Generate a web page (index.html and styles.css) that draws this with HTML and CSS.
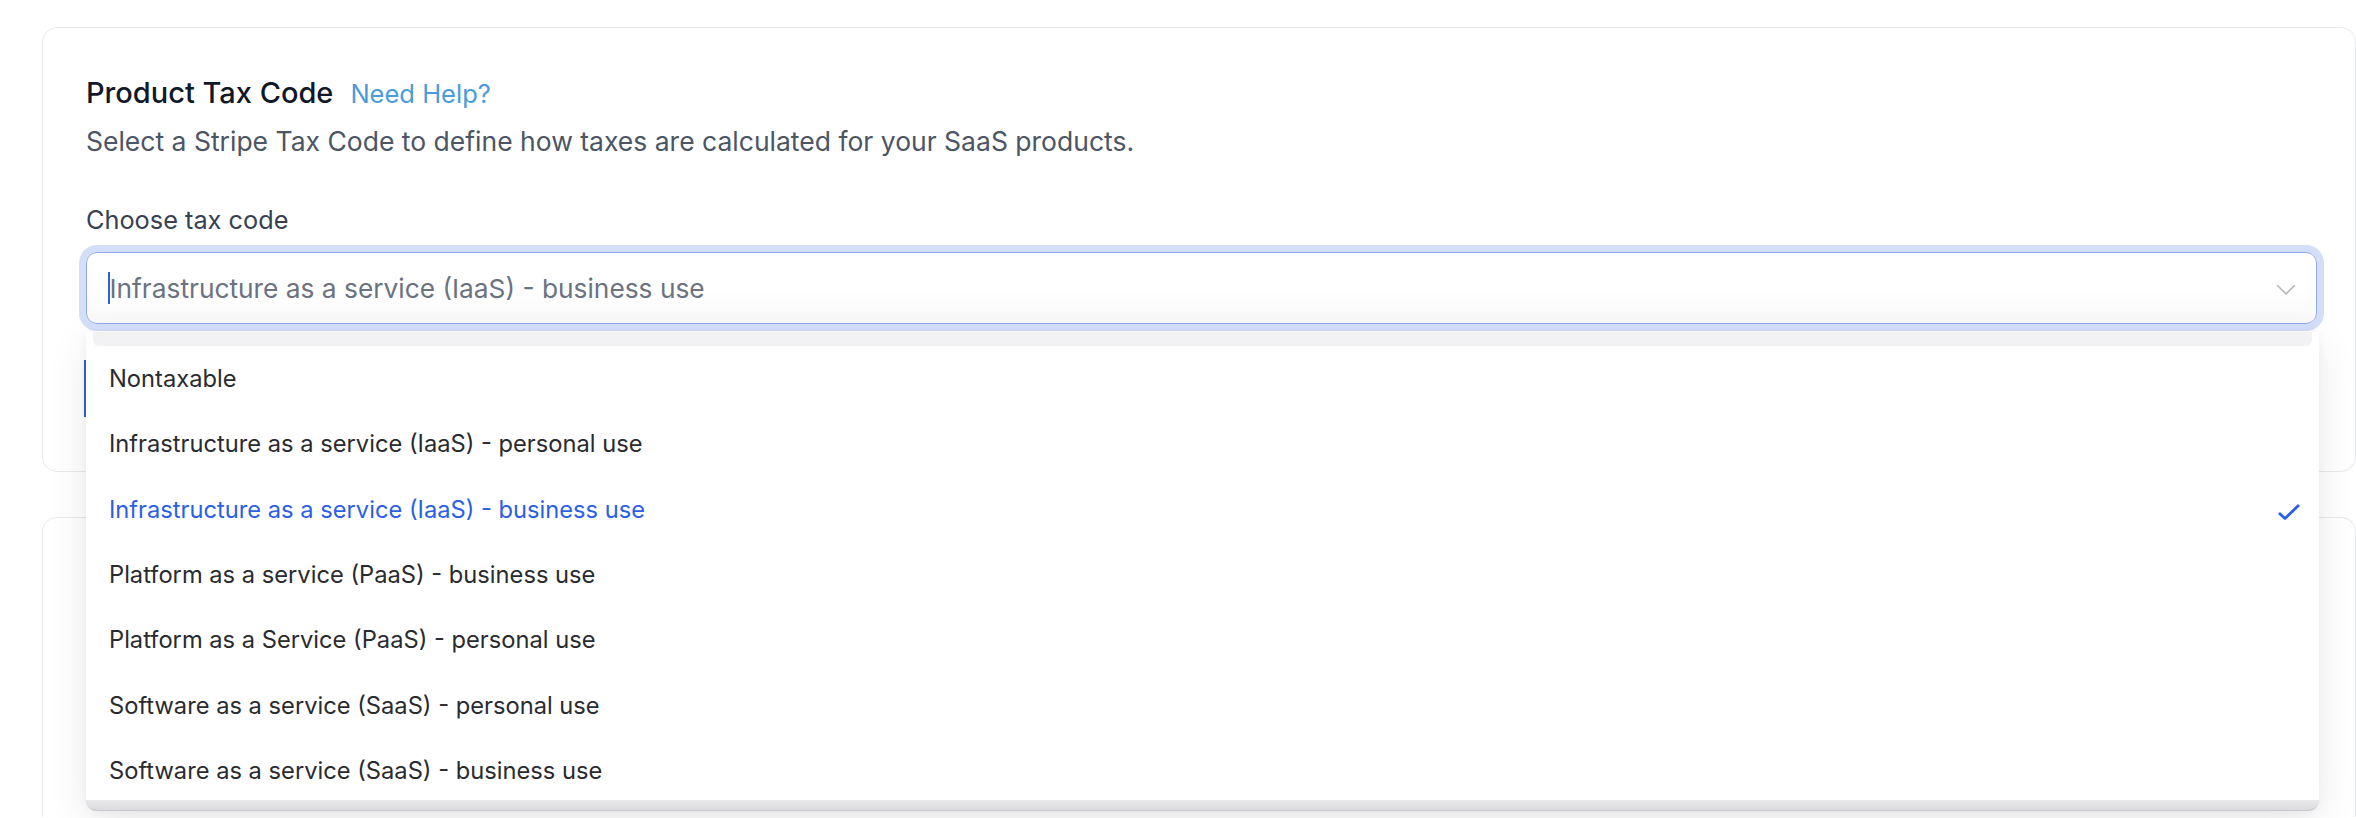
FILE: index.html
```html
<!DOCTYPE html>
<html lang="en">
<head>
<meta charset="utf-8">
<title>Product Tax Code</title>
<link rel="stylesheet" href="styles.css">
</head>
<body>
<main class="page">
  <section class="card card-tax">
    <div class="head">
      <h2 class="title">Product Tax Code</h2>
      <a class="help" href="#">Need Help?</a>
    </div>
    <p class="desc">Select a Stripe Tax Code to define how taxes are calculated for your SaaS products.</p>
    <label class="label">Choose tax code</label>
    <div class="combo">
      <div class="select">
        <span class="caret"></span>
        <span class="value">Infrastructure as a service (IaaS) - business use</span>
        <svg class="chev" viewBox="0 0 20 12" width="20" height="12"><path d="M1.5 1.5 L10 10 L18.5 1.5" fill="none" stroke="#b4b6bb" stroke-width="1.6" stroke-linecap="round" stroke-linejoin="round"/></svg>
      </div>
      <div class="menu">
        <div class="menu-bar"></div>
        <ul class="options">
          <li class="opt">Nontaxable</li>
          <li class="opt">Infrastructure as a service (IaaS) - personal use</li>
          <li class="opt selected">Infrastructure as a service (IaaS) - business use
            <svg class="check" viewBox="0 0 24 18" width="24" height="18"><path d="M2 10 L8 15.5 L22 2" fill="none" stroke="#2b5fe6" stroke-width="2.8" stroke-linejoin="round"/></svg>
          </li>
          <li class="opt">Platform as a service (PaaS) - business use</li>
          <li class="opt">Platform as a Service (PaaS) - personal use</li>
          <li class="opt">Software as a service (SaaS) - personal use</li>
          <li class="opt">Software as a service (SaaS) - business use</li>
        </ul>
        <div class="menu-foot"></div>
      </div>
    </div>
    <div class="hidden-field"></div>
  </section>
  <section class="card card-next"></section>
</main>
</body>
</html>
```
FILE: styles.css
```css
* { box-sizing: border-box; }
html, body { margin: 0; padding: 0; background: #ffffff; }
body {
  font-family: Inter, "Noto Sans", "Liberation Sans", sans-serif;
  color: #1f2937;
  overflow: hidden;
  height: 818px;
}
.page {
  padding: 27px 0 0 42px;
  display: flex;
  flex-direction: column;
  gap: 45px;
}
.card {
  background: #fff;
  border: 1px solid #e8e9ec;
  border-radius: 15px;
  width: 2314px;
}
.card-tax {
  display: flex;
  flex-direction: column;
  padding: 47px 38px 53px 43px;
  height: 445px;
}
.card-next {
  height: 300px;
  border-bottom: 0;
  border-radius: 15px 15px 0 0;
}
.head {
  display: flex;
  align-items: baseline;
  gap: 17px;
  height: 36px;
}
.title {
  margin: 0;
  font-size: 29px;
  font-weight: 500;
  line-height: 36px;
  color: #111827;
}
.help {
  font-size: 25.5px;
  line-height: 36px;
  color: #4a9bdc;
  text-decoration: none;
}
.desc {
  margin: 14px 0 0;
  font-size: 26.5px;
  line-height: 32px;
  color: #4b5563;
}
.label {
  margin-top: 48px;
  font-size: 25.3px;
  line-height: 30px;
  color: #374151;
}
.combo {
  position: relative;
  margin-top: 17px;
}
.select {
  height: 72px;
  display: flex;
  align-items: center;
  padding: 0 20px 0 21px;
  border: 1.5px solid #8eaaf0;
  border-radius: 11px;
  background: linear-gradient(#ffffff 55%, #f8f8f9);
  box-shadow: 0 0 0 7px #d3def9;
}
.caret {
  width: 1.5px;
  height: 32px;
  background: #2f5ee6;
}
.value {
  flex: 1;
  font-size: 26.3px;
  color: #6b7280;
}
.chev { margin-top: 4px; }
.menu {
  position: absolute;
  top: 80px;
  left: 0;
  right: -2px;
  background: #fff;
  border-radius: 0 0 14px 14px;
  box-shadow: 0 12px 40px rgba(0, 0, 0, 0.09), 0 2px 10px rgba(0, 0, 0, 0.04);
  z-index: 2;
}
.menu-bar {
  height: 14px;
  margin: 0 7px;
  background: #f2f2f4;
  border-radius: 0 0 6px 6px;
}
.options {
  list-style: none;
  margin: 0;
  padding: 0;
}
.opt {
  display: flex;
  align-items: center;
  justify-content: space-between;
  height: 65.3px;
  padding: 0 18px 0 23px;
  font-size: 23.7px;
  color: #2a2b2f;
}
.opt.selected { color: #2b5fe6; }
.check { margin-top: 6px; }
.menu-foot {
  height: 11px;
  margin-top: -3px;
  background: linear-gradient(#e9e9eb, #dcdcdf);
  border-bottom: 1.5px solid #c8c9cf;
  border-radius: 0 0 14px 14px;
}
.hidden-field {
  margin-top: 36px;
  margin-left: -2px;
  height: 57px;
  width: 40px;
  border-left: 2px solid #2f5ee6;
}
```
